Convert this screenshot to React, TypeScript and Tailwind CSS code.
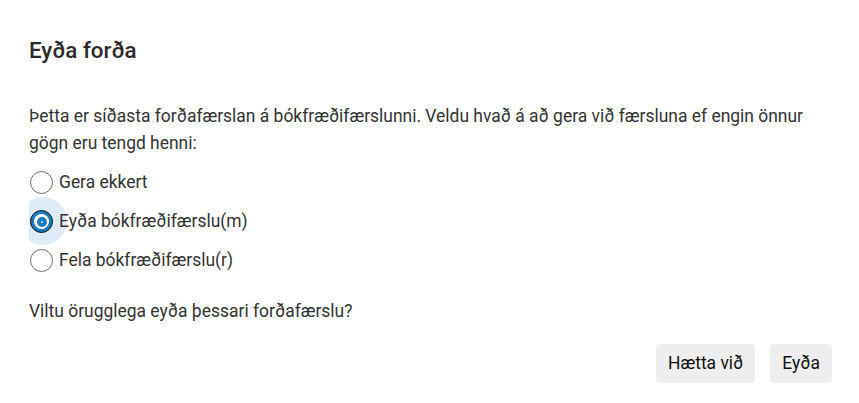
import { useState } from 'react';

const options = [
  { id: 'none', label: 'Gera ekkert' },
  { id: 'delete', label: 'Eyða bókfræðifærslu(m)' },
  { id: 'hide', label: 'Fela bókfræðifærslu(r)' },
];

export default function App() {
  const [choice, setChoice] = useState('delete');

  return (
    <div className="w-[859px] h-[403px] bg-white font-['Roboto',sans-serif] pl-[29px] pr-[27px] pt-[35px]">
      <h2 className="text-[22.4px] font-medium leading-[30px] text-[#2a2a2a]">Eyða forða</h2>

      <p className="mt-[38px] text-[17.45px] leading-[27px] text-[#333]">
        Þetta er síðasta forðafærslan á bókfræðifærslunni. Veldu hvað á að gera við færsluna ef engin önnur gögn eru tengd henni:
      </p>

      <div className="mt-[6px] flex flex-col">
        {options.map((o) => {
          const selected = o.id === choice;
          return (
            <label
              key={o.id}
              onClick={() => setChoice(o.id)}
              className="relative h-[39px] flex items-center gap-[6px] cursor-pointer text-[17.45px] text-[#333]"
            >
              {selected && (
                <span className="absolute left-0 top-[-5px] w-[37px] h-[48px] overflow-hidden">
                  <span className="absolute left-[-10px] top-0 w-[48px] h-[48px] rounded-full bg-[#deebf6]" />
                </span>
              )}
              <span className="relative ml-[1px] w-[23px] h-[23px] shrink-0">
                {selected ? (
                  <span className="absolute inset-0 rounded-full border border-[#111] bg-[#1a7bc0] flex items-center justify-center">
                    <span className="w-[15px] h-[15px] rounded-full bg-white flex items-center justify-center">
                      <span className="w-[10px] h-[10px] rounded-full bg-[#1a7bc0] flex items-center justify-center">
                        <span className="w-[2px] h-[2px] rounded-full bg-white/80" />
                      </span>
                    </span>
                  </span>
                ) : (
                  <span className="absolute inset-0 rounded-full border-[1.5px] border-[#6b6b6b] bg-white" />
                )}
              </span>
              <span className="relative">{o.label}</span>
            </label>
          );
        })}
      </div>

      <p className="mt-[18px] text-[17.45px] leading-[27px] text-[#333]">Viltu örugglega eyða þessari forðafærslu?</p>

      <div className="mt-[19px] flex justify-end gap-[15px]">
        <button className="h-[39px] px-[12px] rounded-[4px] bg-[#eeeeee] text-[17.45px] text-[#111]">Hætta við</button>
        <button className="h-[39px] px-[12px] rounded-[4px] bg-[#eeeeee] text-[17.45px] text-[#111]">Eyða</button>
      </div>
    </div>
  );
}
